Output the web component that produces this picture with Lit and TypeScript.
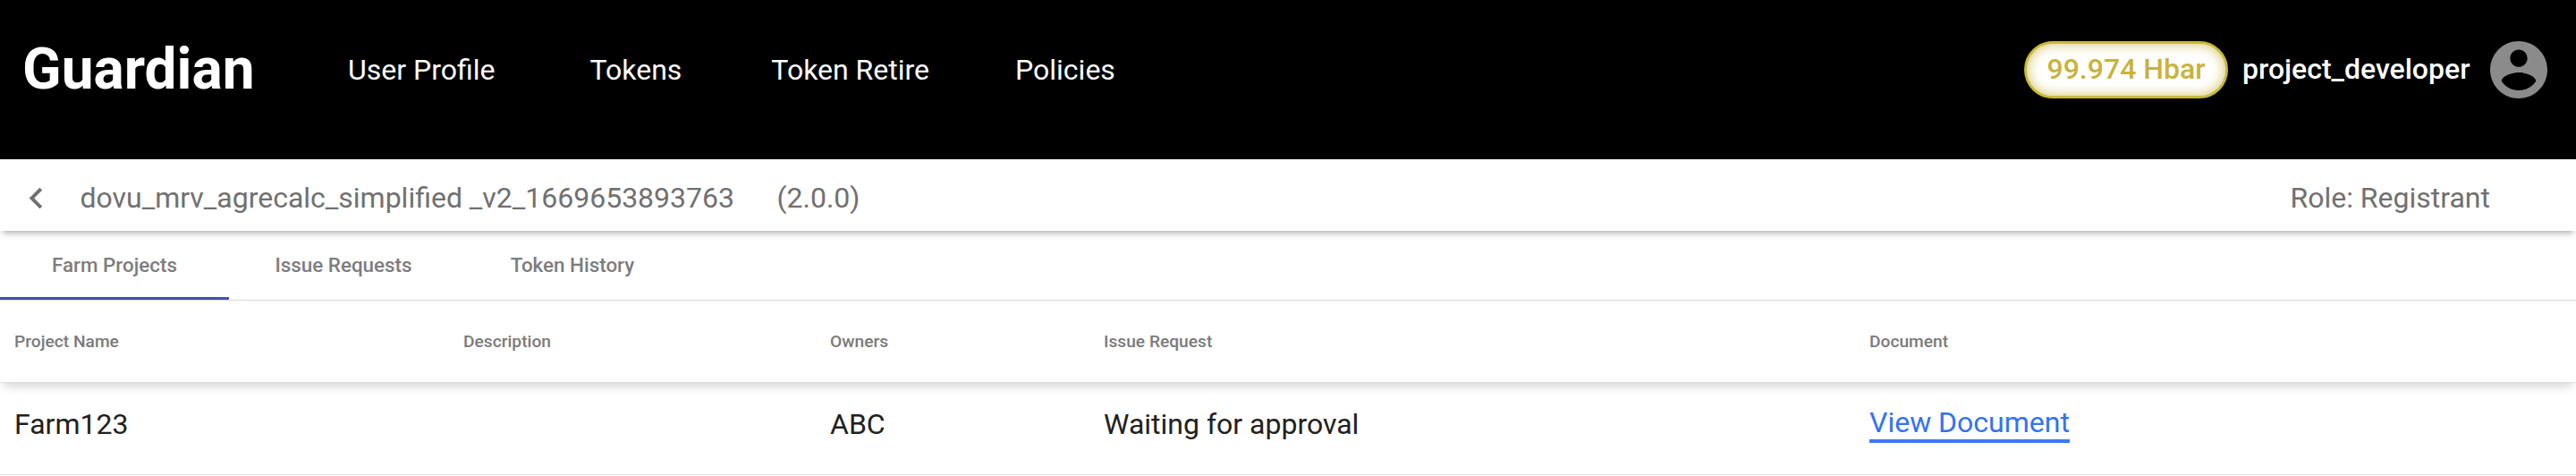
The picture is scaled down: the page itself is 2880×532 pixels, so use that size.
import { LitElement, html, css, svg } from 'lit';
import { customElement, state } from 'lit/decorators.js';
import { classMap } from 'lit/directives/class-map.js';

interface Project {
  name: string;
  description: string;
  owner: string;
  status: string;
}

const accountIcon = svg`<path d="M12 2C6.48 2 2 6.48 2 12s4.48 10 10 10 10-4.48 10-10S17.52 2 12 2zm0 3c1.66 0 3 1.34 3 3s-1.34 3-3 3-3-1.34-3-3 1.34-3 3-3zm0 14.2c-2.5 0-4.71-1.28-6-3.22.03-1.99 4-3.08 6-3.08 1.99 0 5.97 1.09 6 3.08-1.29 1.94-3.5 3.22-6 3.22z"></path>`;
const chevronLeft = svg`<path d="M15.41 7.41L14 6l-6 6 6 6 1.41-1.41L10.83 12z"></path>`;

@customElement('app-header')
export class AppHeader extends LitElement {
  static styles = css`
    :host {
      display: flex;
      align-items: flex-start;
      justify-content: space-between;
      box-sizing: border-box;
      height: 178px;
      padding: 0 32px 0 25px;
      background: #000;
      color: #fff;
    }
    .left,
    .right {
      display: flex;
      align-items: center;
      height: 156px;
    }
    .brand {
      width: 364px;
      font-size: 64px;
      font-weight: 700;
      line-height: 76px;
    }
    .nav {
      display: flex;
      font-size: 32px;
      line-height: 40px;
    }
    .item:nth-child(1) {
      margin-right: 106px;
    }
    .item:nth-child(2) {
      margin-right: 100px;
    }
    .item:nth-child(3) {
      margin-right: 96px;
    }
    .right {
      font-size: 32px;
      font-weight: 500;
      line-height: 38px;
    }
    .balance {
      display: flex;
      align-items: center;
      justify-content: center;
      box-sizing: border-box;
      width: 228px;
      height: 64px;
      margin-right: 16px;
      padding-bottom: 2px;
      border: 3px solid #c7ba3a;
      border-radius: 32px;
      background: #fff;
      box-shadow: inset 0 0 14px rgba(200, 180, 60, 0.8);
      color: #c8b33c;
    }
    .user {
      width: 277px;
      padding-bottom: 2px;
    }
    .avatar {
      width: 64px;
      height: 64px;
      fill: #8b8b8b;
    }
  `;

  render() {
    return html`
      <div class="left">
        <div class="brand">Guardian</div>
        <nav class="nav">
          ${['User Profile', 'Tokens', 'Token Retire', 'Policies'].map(
            (label) => html`<span class="item">${label}</span>`
          )}
        </nav>
      </div>
      <div class="right">
        <div class="balance">99.974 Hbar</div>
        <div class="user">project_developer</div>
        <svg class="avatar" viewBox="2 2 20 20">${accountIcon}</svg>
      </div>
    `;
  }
}

@customElement('policy-bar')
export class PolicyBar extends LitElement {
  static styles = css`
    :host {
      display: flex;
      align-items: center;
      box-sizing: border-box;
      height: 80px;
      padding: 6px 96px 0 17px;
      position: relative;
      z-index: 1;
      background: #fff;
      color: #707070;
      font-size: 32px;
      line-height: 38px;
      box-shadow: 0 6px 6px -4px rgba(0, 0, 0, 0.24), 0 2px 10px rgba(0, 0, 0, 0.13);
    }
    .back {
      width: 47px;
      height: 47px;
      margin-right: 25.5px;
      fill: #707070;
    }
    .version {
      margin-left: 47.5px;
    }
    .role {
      margin-left: auto;
    }
  `;

  render() {
    return html`
      <svg class="back" viewBox="0 0 24 24">${chevronLeft}</svg>
      <span>dovu_mrv_agrecalc_simplified _v2_1669653893763</span>
      <span class="version">(2.0.0)</span>
      <span class="role">Role: Registrant</span>
    `;
  }
}

@customElement('policy-tabs')
export class PolicyTabs extends LitElement {
  static styles = css`
    :host {
      display: flex;
      box-sizing: border-box;
      height: 78px;
      border-bottom: 1px solid #dcdcdc;
      background: #fff;
    }
    .tab {
      box-sizing: border-box;
      width: 256px;
      height: 77px;
      border-bottom: 3px solid transparent;
      color: #7d7d7d;
      font-size: 22.4px;
      font-weight: 500;
      line-height: 76px;
      text-align: center;
    }
    .active {
      border-color: #4350b2;
    }
  `;

  @state() private selected = 0;

  render() {
    return ['Farm Projects', 'Issue Requests', 'Token History'].map(
      (label, i) => html`<div
        class=${classMap({ tab: true, active: i === this.selected })}
        @click=${() => (this.selected = i)}
      >
        ${label}
      </div>`
    );
  }
}

@customElement('project-table')
export class ProjectTable extends LitElement {
  static styles = css`
    :host {
      display: block;
      background: #fff;
    }
    .row {
      display: grid;
      grid-template-columns: 502px 410px 306px 856px 1fr;
      align-items: center;
      box-sizing: border-box;
      padding-left: 16px;
    }
    .head {
      height: 92px;
      padding-bottom: 0;
      border-bottom: 1px solid #dedede;
      position: relative;
      color: #7a7a7a;
      font-size: 19.2px;
      font-weight: 500;
      line-height: 22px;
      box-shadow: 0 8px 10px -4px rgba(0, 0, 0, 0.16);
    }
    .body {
      height: 103px;
      padding-bottom: 10px;
      border-bottom: 1px solid #dedede;
      color: #212121;
      font-size: 32px;
      line-height: 38px;
    }
    .link {
      justify-self: start;
      box-sizing: border-box;
      height: 43px;
      margin-bottom: 1px;
      border-bottom: 4px solid #3b78f8;
      color: #3272f5;
      line-height: 40px;
    }
  `;

  private projects: Project[] = [
    { name: 'Farm123', description: '', owner: 'ABC', status: 'Waiting for approval' },
  ];

  render() {
    return html`
      <div class="row head">
        ${['Project Name', 'Description', 'Owners', 'Issue Request', 'Document'].map(
          (label) => html`<span>${label}</span>`
        )}
      </div>
      ${this.projects.map(
        (p) => html`<div class="row body">
          <span>${p.name}</span>
          <span>${p.description}</span>
          <span>${p.owner}</span>
          <span>${p.status}</span>
          <span class="link">View Document</span>
        </div>`
      )}
    `;
  }
}

@customElement('app-root')
export class AppRoot extends LitElement {
  static styles = css`
    :host {
      display: block;
      height: 532px;
      overflow: hidden;
      background: #fff;
      font-family: Roboto, 'Liberation Sans', sans-serif;
    }
  `;

  render() {
    return html`
      <app-header></app-header>
      <policy-bar></policy-bar>
      <policy-tabs></policy-tabs>
      <project-table></project-table>
    `;
  }
}
